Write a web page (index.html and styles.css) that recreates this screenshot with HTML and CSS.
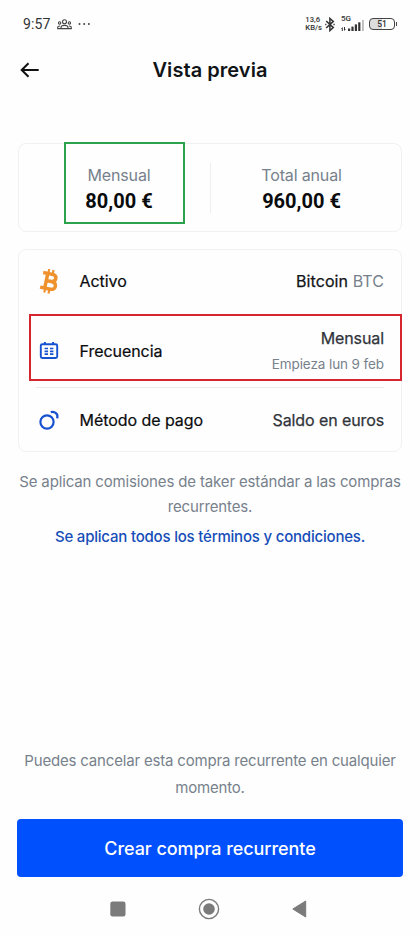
FILE: index.html
```html
<!DOCTYPE html>
<html lang="es">
<head>
<meta charset="utf-8">
<meta name="viewport" content="width=device-width, initial-scale=1">
<title>Vista previa</title>
<link rel="stylesheet" href="styles.css">
</head>
<body>
<div class="screen">
  <div class="status">
    <div class="status-left">
      <span class="clock">9:57</span>
      <svg class="people" width="15" height="11" viewBox="0 0 15 11" fill="none" stroke="#444" stroke-width="1.1"><circle cx="7.5" cy="2.8" r="2"/><circle cx="2.6" cy="3.9" r="1.2"/><circle cx="12.4" cy="3.9" r="1.2"/><path d="M4 9.6V8.4Q4 6.4 7.5 6.4T11 8.4V9.6ZM3 7Q.7 7 .7 8.6V9.6H4M12 7Q14.3 7 14.3 8.6V9.6H11"/></svg>
      <svg class="dots" width="13" height="4" viewBox="0 0 13 4" fill="#444"><circle cx="1.5" cy="2" r="1"/><circle cx="6.2" cy="2" r="1"/><circle cx="10.9" cy="2" r="1"/></svg>
    </div>
    <div class="status-right">
      <div class="speed"><span>13,6</span><span>KB/s</span></div>
      <svg class="bt" width="10" height="15" viewBox="0 0 10 15" fill="none" stroke="#333" stroke-width="1.5"><path d="M1.2 4 8.3 10.6 4.9 13.6V1.4L8.3 4.4 1.2 11"/><path d="M.2 7.5H1.4M8.4 7.5H9.7" stroke-width="1.5"/></svg>
      <div class="network">
        <span>5G</span>
        <svg width="24" height="13" viewBox="0 0 24 13"><g fill="#333"><path d="M0 10 1.8 8V12H.8V10ZM3 8V12L5 10H4V8Z"/><rect x="7" y="9.5" width="2.2" height="2.5"/><rect x="10.4" y="7.6" width="2.2" height="4.4"/><rect x="13.8" y="5.4" width="2.2" height="6.6"/><rect x="17.2" y="3.3" width="2.2" height="8.7"/></g><rect x="21" y="1" width="1.8" height="11" fill="#bbb"/></svg>
      </div>
      <div class="battery"><span>51</span></div>
    </div>
  </div>

  <header class="header">
    <svg class="back" width="20" height="16" viewBox="0 0 20 16" fill="none" stroke="#111" stroke-width="2"><path d="M18.7 8H2M8.5 1.2 1.7 8l6.8 6.8"/></svg>
    <h1>Vista previa</h1>
  </header>

  <section class="card totals">
    <div class="total"><span class="label">Mensual</span><strong>80,00 €</strong></div>
    <div class="total"><span class="label">Total anual</span><strong>960,00 €</strong></div>
    <div class="mark mark-green"></div>
  </section>

  <section class="card details">
    <div class="row row-asset">
      <svg class="icon" width="22" height="26" viewBox="0 0 22 26"><g transform="translate(1.9 -.7) rotate(12 9 13)" fill="none" stroke="#ef922e"><path stroke-width="3.5" d="M6.3 5.4V20.6M1.6 5.5H11Q15.2 5.5 15.2 9T11 12.7H6.3M10.5 12.7Q16.4 12.7 16.4 16.7T10.8 20.5H1.6"/><path stroke-width="2.2" d="M6.8 1V5M11.2 1V5M6.8 21V25M11.2 21V25"/></g></svg>
      <span class="name">Activo</span>
      <div class="value asset">Bitcoin <span class="ticker">BTC</span></div>
    </div>
    <div class="row row-frequency">
      <svg class="icon" width="22" height="20" viewBox="0 0 22 20" fill="none" stroke="#1652d0" stroke-width="1.9"><rect x="2.8" y="3.3" width="16.4" height="13.7" rx="1.5"/><path d="M6.9 1V4M15.1 1V4" stroke-width="2"/><path d="M6.6 7.5H10M12 7.5H15.4M6.6 10.3H10M12 10.3H15.4M6.6 13.1H10M12 13.1H15.4" stroke-width="1.7"/></svg>
      <span class="name">Frecuencia</span>
      <div class="value">Mensual<small>Empieza lun 9 feb</small></div>
      <div class="mark mark-red"></div>
    </div>
    <div class="row row-payment">
      <svg class="icon" width="22" height="22" viewBox="0 0 22 22" fill="none" stroke="#1652d0" stroke-width="2.2"><circle cx="9" cy="13" r="6.6"/><path d="M12.8 3.1C16.5 1.9 20.7 4.8 19.1 9.3"/></svg>
      <span class="name">Método de pago</span>
      <div class="value">Saldo en euros</div>
    </div>
  </section>

  <p class="note fees">Se aplican comisiones de taker estándar a las compras<br>recurrentes.</p>
  <a class="terms">Se aplican todos los términos y condiciones.</a>

  <footer class="footer">
    <p class="note cancel">Puedes cancelar esta compra recurrente en cualquier<br>momento.</p>
    <button class="cta">Crear compra recurrente</button>
    <nav class="system-nav">
      <svg width="22" height="22" viewBox="0 0 22 22" fill="#7b7b7b"><rect x="3.3" y="3.5" width="15.2" height="15" rx="2.3"/></svg>
      <svg width="22" height="22" viewBox="0 0 22 22"><circle cx="11" cy="11" r="9.6" fill="none" stroke="#7b7b7b" stroke-width="1.4"/><circle cx="11" cy="11" r="5.8" fill="#7b7b7b"/></svg>
      <svg width="22" height="22" viewBox="0 0 22 22" fill="#7b7b7b" stroke="#7b7b7b" stroke-linejoin="round"><path d="M4.8 11 17.7 3V19Z"/></svg>
    </nav>
  </footer>
</div>
</body>
</html>
```
FILE: styles.css
```css
* { box-sizing: border-box; }
body { margin: 0; background: #fefefe; font-family: Inter, "Liberation Sans", sans-serif; color: #111417; }
.screen { width: 420px; height: 935px; display: flex; flex-direction: column; overflow: hidden; }

.status { height: 48px; padding: 0 25px 0 23px; display: flex; justify-content: space-between; align-items: center; font-family: Roboto, sans-serif; color: #333; }
.status-left, .status-right { display: flex; align-items: center; }
.clock { font-size: 14px; letter-spacing: .1px; }
.people { margin-left: 7px; }
.dots { margin-left: 6px; }
.speed { display: flex; flex-direction: column; font-size: 7.7px; font-weight: 500; line-height: 8px; }
.bt { margin-left: 3px; }
.network { margin-left: 6px; position: relative; display: flex; align-items: center; }
.network span { position: absolute; left: 0; top: -2px; font-size: 8px; line-height: 8px; font-weight: 500; }
.network svg { margin-top: 2px; }
.battery { position: relative; margin-left: 4px; width: 26px; height: 12px; border: 1.4px solid #444; border-radius: 4px; background: linear-gradient(90deg, #ddd 50%, #fefefe 50%); display: flex; align-items: center; justify-content: center; font-size: 8.5px; font-weight: 500; line-height: 10px; }
.battery::after { content: ""; position: absolute; right: -3px; top: 3px; width: 1.5px; height: 4px; background: #444; }

.header { height: 44px; padding: 0 20px; display: grid; grid-template-columns: 20px 1fr 20px; align-items: center; }
.header h1 { margin: 0; font-size: 20px; font-weight: 600; text-align: center; letter-spacing: .05px; }

.card { position: relative; margin: 0 18px; border: 1px solid #eff1f2; border-radius: 8px; }
.totals { height: 89px; margin-top: 51px; padding: 0 9px; display: grid; grid-template-columns: 1fr 1fr; align-items: center; }
.total { height: 50px; display: flex; flex-direction: column; align-items: center; }
.total + .total { border-left: 1px solid #eceef0; }
.label { font-size: 16px; line-height: 24px; color: #77818c; letter-spacing: -.15px; }
.total strong { font: 700 20px/28px Roboto, sans-serif; color: #0a0b0d; }
.mark { position: absolute; pointer-events: none; }
.mark-green { left: 45px; top: -2px; width: 121px; height: 82px; border: 2px solid #2ba24c; }

.details { height: 203px; margin-top: 17px; padding: 0 17px; display: grid; grid-template-rows: 63px 75px 63px; }
.row { position: relative; display: flex; align-items: center; font-size: 16px; }
.row-frequency { padding-top: 2px; border-bottom: 1px solid #e9eced; }
.icon { margin-left: 2px; flex: none; }
.name { margin-left: 19.5px; flex: 1; font-weight: 400; color: #0a0b0d; letter-spacing: -.05px; -webkit-text-stroke: .2px currentColor; }
.value { color: #30343a; font-weight: 400; text-align: right; line-height: 26px; letter-spacing: -.1px; -webkit-text-stroke: .25px currentColor; }
.value small { display: block; font-size: 13.5px; font-weight: 400; color: #77818c; -webkit-text-stroke: 0; }
.row-asset .name, .asset { position: relative; top: -1px; }
.asset { color: #111417; letter-spacing: .08px; }
.ticker { color: #77818c; -webkit-text-stroke: 0; }
.mark-red { left: -7px; right: -18px; top: 1px; height: 67px; border: 2px solid #d5262f; }

.note { margin: 0; text-align: center; color: #77818c; font-size: 15px; letter-spacing: -.15px; }
.fees { margin-top: 18px; line-height: 24.5px; }
.terms { margin-top: 6px; text-align: center; color: #164db8; font-size: 15px; line-height: 24px; font-weight: 500; letter-spacing: -.2px; }

.footer { margin-top: auto; }
.cancel { line-height: 27px; letter-spacing: -.18px; }
.cta { display: block; width: 386px; height: 58px; margin: 18px 17px 0; border: 0; border-radius: 4px; background: #0150fd; color: #fff; font: 500 18px Inter, sans-serif; letter-spacing: -.07px; }
.system-nav { height: 58px; padding: 6px 110px 0 107px; display: flex; justify-content: space-between; align-items: center; }
```
